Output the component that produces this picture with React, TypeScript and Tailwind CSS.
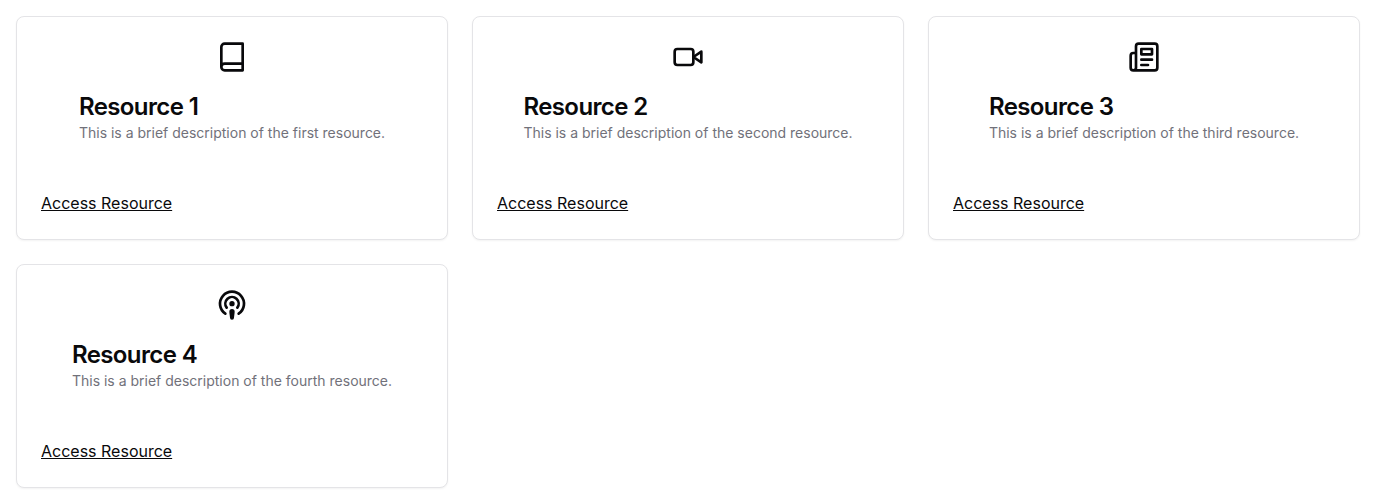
import React from "react";

type Resource = { title: string; description: string; icon: React.ReactNode };

const resources: Resource[] = [
  {
    title: "Resource 1",
    description: "This is a brief description of the first resource.",
    icon: <path d="M4 19.5v-15A2.5 2.5 0 0 1 6.5 2H20v20H6.5a2.5 2.5 0 0 1 0-5H20" />,
  },
  {
    title: "Resource 2",
    description: "This is a brief description of the second resource.",
    icon: (
      <>
        <path d="m22 8-6 4 6 4V8Z" />
        <rect width="14" height="12" x="2" y="6" rx="2" ry="2" />
      </>
    ),
  },
  {
    title: "Resource 3",
    description: "This is a brief description of the third resource.",
    icon: (
      <>
        <path d="M4 22h16a2 2 0 0 0 2-2V4a2 2 0 0 0-2-2H8a2 2 0 0 0-2 2v16a2 2 0 0 1-2 2Zm0 0a2 2 0 0 1-2-2v-9c0-1.1.9-2 2-2h2" />
        <path d="M18 14h-8" />
        <path d="M15 18h-5" />
        <path d="M10 6h8v4h-8V6Z" />
      </>
    ),
  },
  {
    title: "Resource 4",
    description: "This is a brief description of the fourth resource.",
    icon: (
      <>
        <circle cx="12" cy="11" r="1" />
        <path d="M11 17a1 1 0 0 1 2 0c0 .5-.34 3-.5 4.5a.5.5 0 0 1-1 0c-.16-1.5-.5-4-.5-4.5Z" />
        <path d="M8 14a5 5 0 1 1 8 0" />
        <path d="M17 18.5a9 9 0 1 0-10 0" />
      </>
    ),
  },
];

function ResourceCard({ title, description, icon }: Resource) {
  return (
    <article className="rounded-lg border border-[#e4e4e7] bg-white shadow-xs">
      <div className="flex flex-col items-center gap-5 p-6">
        <svg
          className="size-8"
          viewBox="0 0 24 24"
          fill="none"
          stroke="currentColor"
          strokeWidth="2"
          strokeLinecap="round"
          strokeLinejoin="round"
          aria-hidden="true"
        >
          {icon}
        </svg>
        <div className="flex flex-col gap-0.5">
          <h3 className="text-2xl leading-7 font-semibold tracking-tight">{title}</h3>
          <p className="text-sm text-[#71717a]">{description}</p>
        </div>
      </div>
      <div className="p-6">
        <a href="#" className="underline">
          Access Resource
        </a>
      </div>
    </article>
  );
}

export default function App() {
  return (
    <main className="grid grid-cols-1 gap-6 p-4 font-['Inter',sans-serif] text-[#09090b] md:grid-cols-2 lg:grid-cols-3">
      {resources.map((resource) => (
        <ResourceCard key={resource.title} {...resource} />
      ))}
    </main>
  );
}
